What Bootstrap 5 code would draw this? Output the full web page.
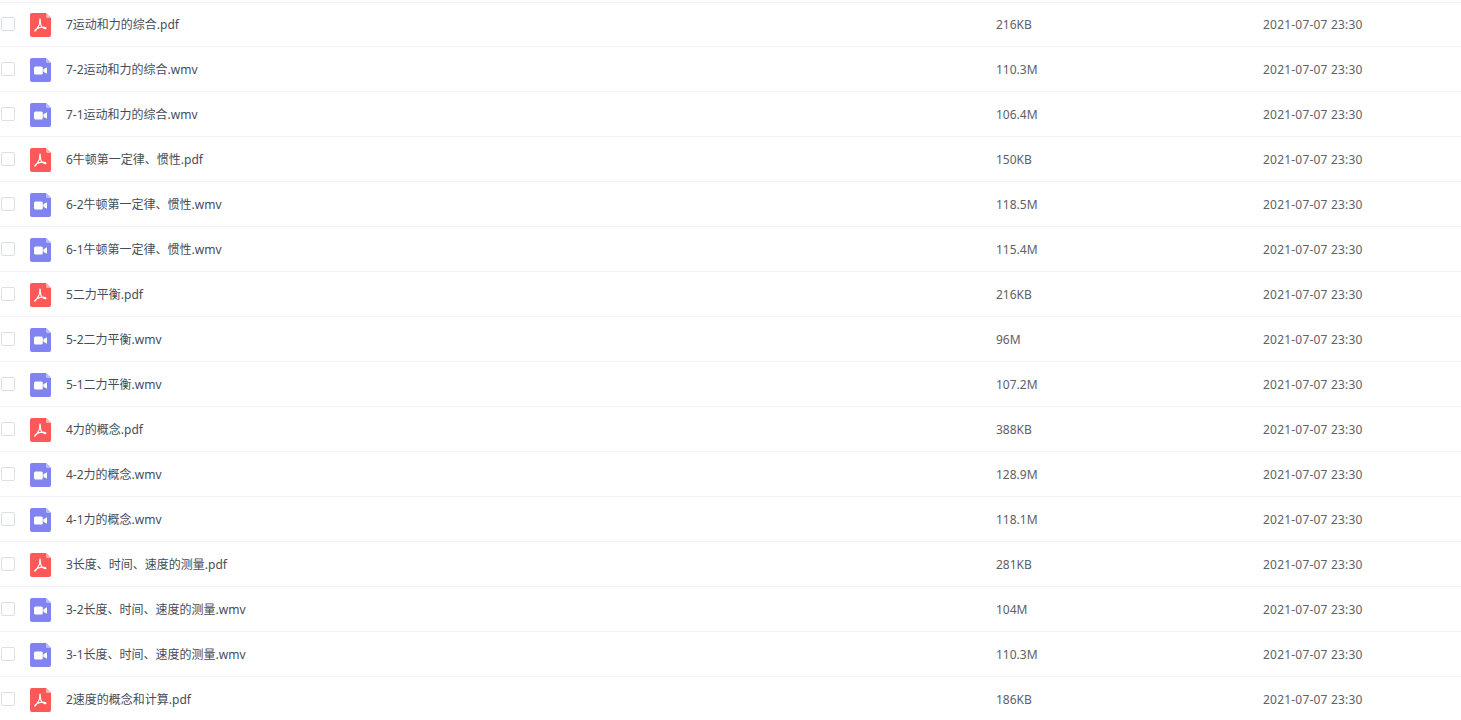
<!DOCTYPE html>
<html lang="zh-CN">
<head>
    <meta charset="UTF-8">
    <meta name="viewport" content="width=device-width, initial-scale=1.0">
    <title>文件列表</title>
    <link href="https://cdn.jsdelivr.net/npm/bootstrap@5.3.0/dist/css/bootstrap.min.css" rel="stylesheet">
    <style>
        html, body { height: 720px; overflow: hidden; }
        body {
            background: #fff;
            font-family: "Noto Sans", "Noto Sans CJK SC", sans-serif;
            font-size: 12px;
            color: #454d5a;
        }
        .file-list { margin-top: 2px; box-shadow: inset 0 1px 0 #f2f4f9; }
        .file-row { height: 45px; border-bottom: 1px solid #f2f4f9; }
        .file-check {
            width: 14px; height: 14px;
            margin-left: 1px; margin-right: 15px;
            border: 1px solid #dcdfe6; border-radius: 2px;
            background: #fff;
        }
        .file-icon { width: 21px; height: 24px; margin-right: 15px; margin-top: 2px; }
        .file-name, .file-size, .file-date { padding-top: 2px; }
        .file-name { width: 930px; }
        .file-size { width: 267px; color: #5e6167; }
        .file-date { color: #5e6167; letter-spacing: .2px; }
    </style>
</head>
<body>
    <svg width="0" height="0" class="d-none">
        <symbol id="ico-pdf" viewBox="0 0 21 24">
            <path d="M2 0H16L21 5V22a2 2 0 0 1-2 2H2a2 2 0 0 1-2-2V2a2 2 0 0 1 2-2z" fill="#fe5858"/>
            <path d="M16 0L21 5H17.500a1.500 1.500 0 0 1-1.500-1.500z" fill="#ffb0b0"/>
            <path d="M10 6c-.6 1 .3 4-1.200 6.600S5 18.800 4.700 18c-.4-.9 3-3.100 6-3.600s5.300.1 5.300.8c0 1-3 .2-4.500-1.800S10.500 5.500 10 6z" fill="none" stroke="#fff" stroke-width="1.100"/>
        </symbol>
        <symbol id="ico-video" viewBox="0 0 21 24">
            <path d="M2 0H16L21 5V22a2 2 0 0 1-2 2H2a2 2 0 0 1-2-2V2a2 2 0 0 1 2-2z" fill="#8183f1"/>
            <path d="M16 0L21 5H17.500a1.500 1.500 0 0 1-1.500-1.500z" fill="#bcbdf8"/>
            <rect x="4" y="8.500" width="8.800" height="8" rx="1.500" fill="#fff"/>
            <path d="M13.400 11.300L17 9.300V15.700L13.400 13.700z" fill="#fff"/>
        </symbol>
    </svg>
    <div class="file-list">
        <div class="file-row d-flex align-items-center"><span class="file-check"></span><svg class="file-icon"><use href="#ico-pdf"/></svg><span class="file-name">7运动和力的综合.pdf</span><span class="file-size">216KB</span><span class="file-date">2021-07-07 23:30</span></div>
        <div class="file-row d-flex align-items-center"><span class="file-check"></span><svg class="file-icon"><use href="#ico-video"/></svg><span class="file-name">7-2运动和力的综合.wmv</span><span class="file-size">110.3M</span><span class="file-date">2021-07-07 23:30</span></div>
        <div class="file-row d-flex align-items-center"><span class="file-check"></span><svg class="file-icon"><use href="#ico-video"/></svg><span class="file-name">7-1运动和力的综合.wmv</span><span class="file-size">106.4M</span><span class="file-date">2021-07-07 23:30</span></div>
        <div class="file-row d-flex align-items-center"><span class="file-check"></span><svg class="file-icon"><use href="#ico-pdf"/></svg><span class="file-name">6牛顿第一定律、惯性.pdf</span><span class="file-size">150KB</span><span class="file-date">2021-07-07 23:30</span></div>
        <div class="file-row d-flex align-items-center"><span class="file-check"></span><svg class="file-icon"><use href="#ico-video"/></svg><span class="file-name">6-2牛顿第一定律、惯性.wmv</span><span class="file-size">118.5M</span><span class="file-date">2021-07-07 23:30</span></div>
        <div class="file-row d-flex align-items-center"><span class="file-check"></span><svg class="file-icon"><use href="#ico-video"/></svg><span class="file-name">6-1牛顿第一定律、惯性.wmv</span><span class="file-size">115.4M</span><span class="file-date">2021-07-07 23:30</span></div>
        <div class="file-row d-flex align-items-center"><span class="file-check"></span><svg class="file-icon"><use href="#ico-pdf"/></svg><span class="file-name">5二力平衡.pdf</span><span class="file-size">216KB</span><span class="file-date">2021-07-07 23:30</span></div>
        <div class="file-row d-flex align-items-center"><span class="file-check"></span><svg class="file-icon"><use href="#ico-video"/></svg><span class="file-name">5-2二力平衡.wmv</span><span class="file-size">96M</span><span class="file-date">2021-07-07 23:30</span></div>
        <div class="file-row d-flex align-items-center"><span class="file-check"></span><svg class="file-icon"><use href="#ico-video"/></svg><span class="file-name">5-1二力平衡.wmv</span><span class="file-size">107.2M</span><span class="file-date">2021-07-07 23:30</span></div>
        <div class="file-row d-flex align-items-center"><span class="file-check"></span><svg class="file-icon"><use href="#ico-pdf"/></svg><span class="file-name">4力的概念.pdf</span><span class="file-size">388KB</span><span class="file-date">2021-07-07 23:30</span></div>
        <div class="file-row d-flex align-items-center"><span class="file-check"></span><svg class="file-icon"><use href="#ico-video"/></svg><span class="file-name">4-2力的概念.wmv</span><span class="file-size">128.9M</span><span class="file-date">2021-07-07 23:30</span></div>
        <div class="file-row d-flex align-items-center"><span class="file-check"></span><svg class="file-icon"><use href="#ico-video"/></svg><span class="file-name">4-1力的概念.wmv</span><span class="file-size">118.1M</span><span class="file-date">2021-07-07 23:30</span></div>
        <div class="file-row d-flex align-items-center"><span class="file-check"></span><svg class="file-icon"><use href="#ico-pdf"/></svg><span class="file-name">3长度、时间、速度的测量.pdf</span><span class="file-size">281KB</span><span class="file-date">2021-07-07 23:30</span></div>
        <div class="file-row d-flex align-items-center"><span class="file-check"></span><svg class="file-icon"><use href="#ico-video"/></svg><span class="file-name">3-2长度、时间、速度的测量.wmv</span><span class="file-size">104M</span><span class="file-date">2021-07-07 23:30</span></div>
        <div class="file-row d-flex align-items-center"><span class="file-check"></span><svg class="file-icon"><use href="#ico-video"/></svg><span class="file-name">3-1长度、时间、速度的测量.wmv</span><span class="file-size">110.3M</span><span class="file-date">2021-07-07 23:30</span></div>
        <div class="file-row d-flex align-items-center"><span class="file-check"></span><svg class="file-icon"><use href="#ico-pdf"/></svg><span class="file-name">2速度的概念和计算.pdf</span><span class="file-size">186KB</span><span class="file-date">2021-07-07 23:30</span></div>
    </div>
</body>
</html>
